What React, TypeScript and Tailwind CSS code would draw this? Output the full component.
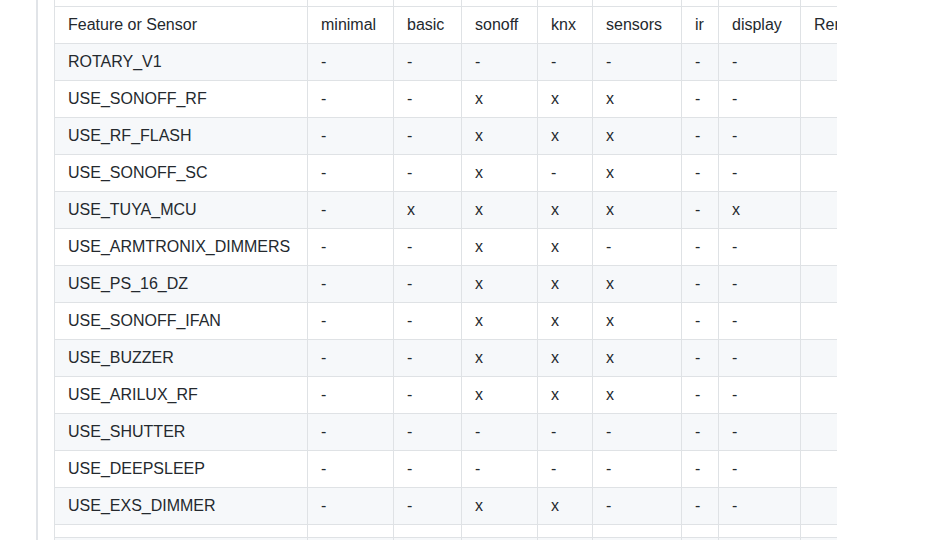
import React from "react";

const widths = ["w-[253px]", "w-[86px]", "w-[68px]", "w-[76px]", "w-[55px]", "w-[89px]", "w-[37px]", "w-[82px]", "w-[160px]"];

const header = ["Feature or Sensor", "minimal", "basic", "sonoff", "knx", "sensors", "ir", "display", "Remarks"];

const rows: [string, string][] = [
  ["ROTARY_V1", "-------"],
  ["USE_SONOFF_RF", "--xxx--"],
  ["USE_RF_FLASH", "--xxx--"],
  ["USE_SONOFF_SC", "--x-x--"],
  ["USE_TUYA_MCU", "-xxxx-x"],
  ["USE_ARMTRONIX_DIMMERS", "--xx---"],
  ["USE_PS_16_DZ", "--xxx--"],
  ["USE_SONOFF_IFAN", "--xxx--"],
  ["USE_BUZZER", "--xxx--"],
  ["USE_ARILUX_RF", "--xxx--"],
  ["USE_SHUTTER", "-------"],
  ["USE_DEEPSLEEP", "-------"],
  ["USE_EXS_DIMMER", "--xx---"],
];

function Row({ cells, gray, h }: { cells: string[]; gray: boolean; h: string }) {
  return (
    <div className={`flex border-t border-[#dfe2e5] ${gray ? "bg-[#f6f8fa]" : "bg-white"}`}>
      {widths.map((w, i) => (
        <div
          key={i}
          className={`${w} ${h} shrink-0 border-l border-[#dfe2e5] px-[13px] py-[6px] leading-6 whitespace-nowrap overflow-hidden`}
        >
          {cells[i] ?? ""}
        </div>
      ))}
    </div>
  );
}

export default function App() {
  return (
    <div
      className="w-[940px] h-[540px] overflow-hidden bg-white text-[16px] text-[#24292e] flex"
      style={{ fontFamily: '"Liberation Sans", Arial, sans-serif' }}
    >
      <div className="ml-[36px] w-[2px] h-full bg-[#e1e4e8] shrink-0" />
      <div className="ml-[16px] w-[783px] h-full overflow-hidden shrink-0">
        <div className="flex flex-col w-max">
          <div className="flex bg-white">
            {widths.map((w, i) => (
              <div key={i} className={`${w} h-[6px] shrink-0 border-l border-[#dfe2e5]`} />
            ))}
          </div>
          <Row cells={header} gray={false} h="h-[36px]" />
          {rows.map(([name, vals], i) => (
            <Row key={name} cells={[name, ...vals.split("")]} gray={i % 2 === 0} h="h-[36px]" />
          ))}
          <Row cells={[]} gray={false} h="h-[12px]" />
          <Row cells={[]} gray={true} h="h-[36px]" />
        </div>
      </div>
    </div>
  );
}
